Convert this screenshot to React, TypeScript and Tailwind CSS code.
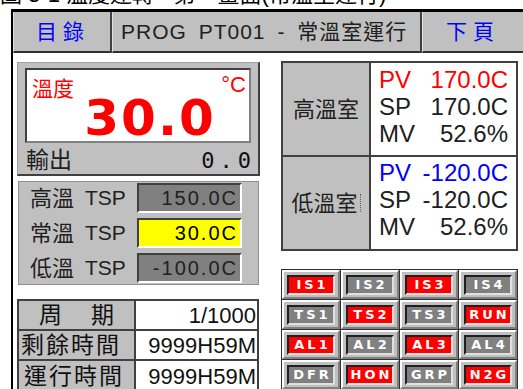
import React from 'react';

const Lamp = ({ label, on }: { label: string; on: boolean }) => (
  <div className="bg-[#c0c0c0] border-2 border-t-white border-l-white border-r-[#808080] border-b-[#808080] flex items-center justify-center">
    <div
      className={`w-[48px] h-[20px] border-2 border-t-[#202020] border-l-[#202020] border-r-[#e0e0e0] border-b-[#e0e0e0] flex items-center justify-center text-white font-['DejaVu_Sans',sans-serif] font-bold text-[13px] tracking-[3px] pl-[3px] ${
        on ? 'bg-[#ff0000]' : 'bg-[#808080]'
      }`}
    >
      {label}
    </div>
  </div>
);

const lamps: [string, boolean][] = [
  ['IS1', true], ['IS2', false], ['IS3', true], ['IS4', false],
  ['TS1', false], ['TS2', true], ['TS3', false], ['RUN', true],
  ['AL1', true], ['AL2', false], ['AL3', true], ['AL4', false],
  ['DFR', false], ['HON', true], ['GRP', false], ['N2G', true],
];

const TspRow = ({ name, value, hot }: { name: string; value: string; hot?: boolean }) => (
  <div className="flex items-center h-[30px]">
    <span className="w-[66px] pl-[11px] text-[22px] text-[#202020]">{name}</span>
    <span className="w-[52px] text-[21px] text-[#202020]">TSP</span>
    <span
      className={`w-[105px] h-[30px] border-2 border-t-[#404040] border-l-[#404040] border-r-white border-b-white flex items-center justify-end pr-[2px] text-[20px] tracking-[2px] ${
        hot ? 'bg-[#ffff00] text-black' : 'bg-[#808080] text-[#202020]'
      }`}
    >
      {value}
    </span>
  </div>
);

const TimeRow = ({ name, value, last }: { name: React.ReactNode; value: string; last?: boolean }) => (
  <div className={`flex h-[30px] ${last ? '' : 'border-b-2 border-[#404040]'}`}>
    <div className="w-[117px] bg-[#c0c0c0] border-r-2 border-[#404040] flex items-center text-[23px] text-[#101010] leading-none">
      {name}
    </div>
    <div className="flex-1 bg-white flex items-center justify-end pr-[1px] text-[22px] text-[#101010]">{value}</div>
  </div>
);

const ChamberRow = ({ tag, value, color }: { tag: string; value: string; color: string }) => (
  <div className={`flex justify-between items-center h-[27px] text-[24px] ${color}`}>
    <span>{tag}</span>
    <span>{value}</span>
  </div>
);

export default function App() {
  return (
    <div className="w-[523px] h-[389px] bg-white overflow-hidden font-['Liberation_Sans','Noto_Sans_CJK_TC',sans-serif]">
      <div className="h-[9px] overflow-hidden">
        <div className="-mt-[22px] whitespace-nowrap text-[22px] text-black">
          圖 3-1 溫度運轉 - 第一畫面(常溫室運行)
        </div>
      </div>

      <div className="ml-[11px] border-l-2 border-t-[3px] border-black h-[380px]">
        {/* header buttons */}
        <div className="flex h-[41px] bg-[#404040] gap-[2px]">
          <div className="w-[97px] bg-[#c0c0c0] border-l border-l-[#e0e0e0] border-b-2 border-b-[#303030] flex items-center justify-center text-[21px] text-[#0000ff] tracking-[6px] pl-[2px]">
            目錄
          </div>
          <div className="w-[308px] bg-[#c0c0c0] border-l border-l-[#e0e0e0] border-b-2 border-b-[#303030] flex items-center pl-[8px] text-[21px] text-[#202020] whitespace-nowrap tracking-[1px] [word-spacing:5px]">
            PROG PT001 - 常溫室運行
          </div>
          <div className="flex-1 bg-[#c0c0c0] border-l border-l-[#e0e0e0] border-b-2 border-b-[#303030] flex items-center justify-center text-[21px] text-[#0000ff] tracking-[6px]">
            下頁
          </div>
        </div>

        <div className="flex pl-[4px] pt-[9px] bg-white">
          {/* left column */}
          <div className="w-[243px] flex flex-col">
            <div className="h-[114px] bg-[#c0c0c0] border-t border-l border-[#a0a0a0] border-r-2 border-b-2 border-r-[#404040] border-b-[#404040] px-[7px] pt-[5px] flex flex-col">
              <div className="h-[75px] bg-white border-2 border-t-[#404040] border-l-[#404040] border-r-[#808080] border-b-[#808080] flex flex-col text-[#ff0000]">
                <div className="flex justify-between pl-[5px] pr-[3px] pt-[6px] h-[26px]">
                  <span className="text-[21px] leading-none mt-[2px]">溫度</span>
                  <span className="text-[22px] leading-none -mt-[2px]">°C</span>
                </div>
                <div className="flex justify-center pl-[24px] -mt-[3px] text-[50px] leading-none font-bold font-['DejaVu_Sans',sans-serif] tracking-[2px]">
                  30.0
                </div>
              </div>
              <div className="flex-1 flex items-center justify-between pl-[1px]">
                <span className="text-[23px] text-[#202020]">輸出</span>
                <span className="text-[22px] text-[#101010] font-['DejaVu_Sans_Mono',monospace] tracking-[5px] -mr-[5px]">0.0</span>
              </div>
            </div>

            <div className="mt-[5px] h-[104px] bg-[#c0c0c0] border border-[#909090] ml-[1px] w-[241px] flex flex-col justify-center gap-[5px]">
              <TspRow name="高溫" value="150.0C" />
              <TspRow name="常溫" value="30.0C" hot />
              <TspRow name="低溫" value="-100.0C" />
            </div>

            <div className="mt-[14px] border-2 border-[#404040] w-[242px]">
              <TimeRow
                name={
                  <span className="flex w-full justify-between px-[20px]">
                    <span>周</span>
                    <span>期</span>
                  </span>
                }
                value="1/1000"
              />
              <TimeRow name={<span className="pl-[2px] tracking-[2px]">剩餘時間</span>} value="9999H59M" />
              <TimeRow name={<span className="pl-[5px] tracking-[2px]">運行時間</span>} value="9999H59M" last />
            </div>
          </div>

          {/* right column */}
          <div className="ml-[21px] w-[237px] flex flex-col">
            <div className="-mt-[1px] h-[190px] border-2 border-[#404040] flex flex-col">
              <div className="flex h-[94px] border-b-2 border-[#404040]">
                <div className="w-[88px] bg-[#c0c0c0] border-r-2 border-[#404040] flex items-center justify-center text-[22px] text-[#202020]">
                  高溫室
                </div>
                <div className="flex-1 bg-white pl-[8px] pr-[8px] pt-[3px]">
                  <ChamberRow tag="PV" value="170.0C" color="text-[#ff0000]" />
                  <ChamberRow tag="SP" value="170.0C" color="text-[#202020]" />
                  <ChamberRow tag="MV" value="52.6%" color="text-[#202020]" />
                </div>
              </div>
              <div className="flex flex-1">
                <div className="w-[88px] bg-[#c0c0c0] border-r-2 border-[#404040] flex items-center justify-center text-[22px] text-[#202020]">
                  低溫室<span className="ml-[2px] h-[18px] border-l border-dotted border-[#606060]" />
                </div>
                <div className="flex-1 bg-white pl-[8px] pr-[8px] pt-[2px]">
                  <ChamberRow tag="PV" value="-120.0C" color="text-[#0000ff]" />
                  <ChamberRow tag="SP" value="-120.0C" color="text-[#202020]" />
                  <ChamberRow tag="MV" value="52.6%" color="text-[#202020]" />
                </div>
              </div>
            </div>

            <div className="mt-[18px] h-[121px] grid grid-cols-4 grid-rows-4 gap-[1px] bg-[#303030] border border-[#303030]">
              {lamps.map(([l, on]) => (
                <Lamp key={l} label={l} on={on} />
              ))}
            </div>
          </div>
        </div>
      </div>
    </div>
  );
}
